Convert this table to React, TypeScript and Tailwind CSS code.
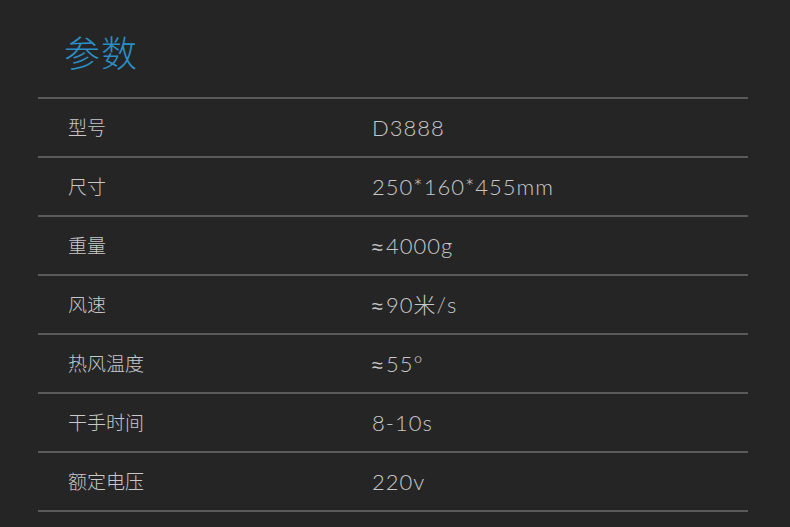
const specs = [
  { label: "型号", value: "D3888" },
  { label: "尺寸", value: "250*160*455mm" },
  { label: "重量", value: "≈4000g" },
  { label: "风速", value: "≈90米/s" },
  { label: "热风温度", value: "≈55°" },
  { label: "干手时间", value: "8-10s" },
  { label: "额定电压", value: "220v" },
];

const cjk = "font-['Noto_Sans_CJK_SC',sans-serif]";

function Value({ text }: { text: string }) {
  // the approx sign is drawn bigger than Lato's in the picture
  if (text.startsWith("≈")) {
    return (
      <>
        <span className="font-['DejaVu_Sans',sans-serif] text-[20px] mr-[2px]">≈</span>
        {text.slice(1)}
      </>
    );
  }
  return <>{text}</>;
}

export default function App() {
  return (
    <div className="w-[790px] h-[527px] bg-[#252525] overflow-hidden">
      <div className="h-[97px] pl-[64px] pt-[26px]">
        <h1 className={`${cjk} font-light text-[36px] leading-[50px] text-[#2a8fc6] tracking-[1px]`}>参数</h1>
      </div>
      <div className="mx-[38px] w-[710px] border-t-2 border-[#5a5a5a]">
        {specs.map((s) => (
          <div key={s.label} className="flex items-center h-[59px] border-b-2 border-[#5a5a5a]">
            <div className={`${cjk} font-light w-[334px] pl-[30px] text-[19px] text-[#c8c8c8]`}>{s.label}</div>
            <div className="font-['Lato','Noto_Sans_CJK_SC',sans-serif] font-light text-[22px] tracking-[1px] text-[#c8c8c8]">
              <Value text={s.value} />
            </div>
          </div>
        ))}
      </div>
    </div>
  );
}
